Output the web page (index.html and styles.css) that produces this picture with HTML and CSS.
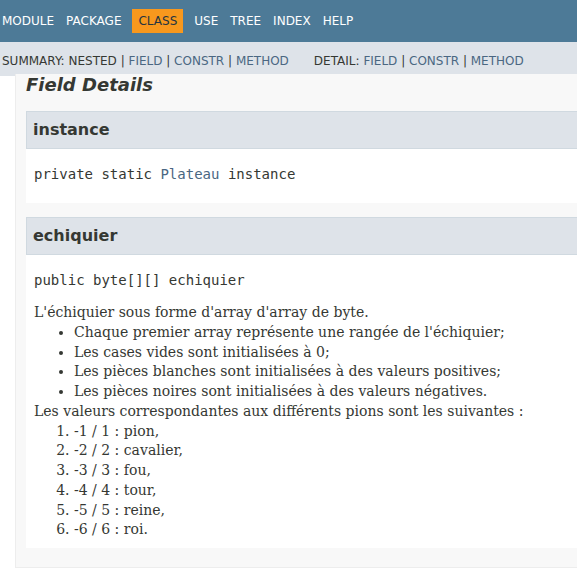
FILE: index.html
```html
<!DOCTYPE html>
<html lang="fr">
<head>
    <meta charset="UTF-8">
    <meta name="viewport" content="width=device-width, initial-scale=1.0">
    <title>Echiquier</title>
    <link rel="stylesheet" href="styles.css">
</head>
<body>
    <header class="flex-header">
        <nav class="top-nav">
            <ul class="nav-list">
                <li>Module</li>
                <li>Package</li>
                <li class="nav-bar-cell1-rev">Class</li>
                <li>Use</li>
                <li>Tree</li>
                <li>Index</li>
                <li>Help</li>
            </ul>
        </nav>
        <div class="sub-nav">
            <ul class="sub-nav-list">
                <li>Summary:&nbsp;</li>
                <li>Nested&nbsp;|&nbsp;</li>
                <li><a href="#field-summary">Field</a>&nbsp;|&nbsp;</li>
                <li><a href="#constructor-summary">Constr</a>&nbsp;|&nbsp;</li>
                <li><a href="#method-summary">Method</a></li>
            </ul>
            <ul class="sub-nav-list">
                <li>Detail:&nbsp;</li>
                <li><a href="#field-detail">Field</a>&nbsp;|&nbsp;</li>
                <li><a href="#constructor-detail">Constr</a>&nbsp;|&nbsp;</li>
                <li><a href="#method-detail">Method</a></li>
            </ul>
        </div>
    </header>

    <main class="flex-content">
        <section class="details" id="field-detail">
            <h2>Field Details</h2>
            <ul class="member-list">
                <li>
                    <section class="detail" id="instance">
                        <h3>instance</h3>
                        <div class="member-body">
                            <div class="member-signature">private static <a href="#plateau">Plateau</a> instance</div>
                        </div>
                    </section>
                </li>
                <li>
                    <section class="detail" id="echiquier">
                        <h3>echiquier</h3>
                        <div class="member-body">
                            <div class="member-signature">public byte[][] echiquier</div>
                            <div class="block">L'échiquier sous forme d'array d'array de byte.
                                <ul>
                                    <li>Chaque premier array représente une rangée de l'échiquier;</li>
                                    <li>Les cases vides sont initialisées à 0;</li>
                                    <li>Les pièces blanches sont initialisées à des valeurs positives;</li>
                                    <li>Les pièces noires sont initialisées à des valeurs négatives.</li>
                                </ul>
                                Les valeurs correspondantes aux différents pions sont les suivantes :
                                <ol>
                                    <li>-1 / 1 : pion,</li>
                                    <li>-2 / 2 : cavalier,</li>
                                    <li>-3 / 3 : fou,</li>
                                    <li>-4 / 4 : tour,</li>
                                    <li>-5 / 5 : reine,</li>
                                    <li>-6 / 6 : roi.</li>
                                </ol>
                            </div>
                        </div>
                    </section>
                </li>
            </ul>
        </section>
    </main>
</body>
</html>
```

FILE: styles.css
```css
html, body {
    margin: 0;
    overflow: hidden;
}
body {
    background-color: #ffffff;
    color: #353833;
    font-family: "DejaVu Sans", Arial, sans-serif;
    font-size: 14px;
}
a {
    color: #4A6782;
    text-decoration: none;
}
.top-nav {
    background-color: #4D7A97;
    color: #ffffff;
    height: 42px;
    display: flex;
    align-items: center;
}
.nav-list {
    display: flex;
    list-style: none;
    margin: 0 0 0 -4px;
    padding: 0;
    font-size: 12px;
    text-transform: uppercase;
}
.nav-list li {
    padding: 5px 6px;
    line-height: 14px;
}
.nav-list .nav-bar-cell1-rev {
    background-color: #F8981D;
    color: #253441;
    margin: 0 5px;
}
.sub-nav {
    background-color: #dee3e9;
    box-sizing: border-box;
    height: 34px;
    padding: 3px 0 0 2px;
    display: flex;
    align-items: center;
    gap: 25px;
}
.sub-nav-list {
    display: flex;
    list-style: none;
    margin: 0;
    padding: 0;
    font-size: 12px;
    text-transform: uppercase;
}
.flex-content {
    padding-left: 15px;
    margin-right: -40px;
}
.details {
    background-color: #f8f8f8;
    border: 1px solid #ededed;
    border-top: none;
    padding: 0 10px 19px 10px;
}
.details h2 {
    margin: -2px 0 16px 0;
    font-size: 18px;
    font-style: italic;
    font-weight: bold;
    line-height: 21px;
}
.member-list {
    list-style: none;
    margin: 0;
    padding: 0;
}
.member-list > li + li {
    margin-top: 14px;
}
.detail {
    background-color: #ffffff;
}
.detail h3 {
    margin: 0;
    background-color: #dee3e9;
    border: 1px solid #d0d9e0;
    padding: 7px 6px;
    font-size: 16px;
    line-height: 22px;
}
.member-body {
    padding: 3px 8px 6px 8px;
}
.member-signature {
    font-family: "DejaVu Sans Mono", monospace;
    font-size: 14px;
    line-height: 17px;
    margin: 14px 0;
    white-space: pre-wrap;
}
.block {
    font-family: "DejaVu Serif", Georgia, serif;
    font-size: 14px;
    line-height: 19.75px;
    margin: 14px 0 2px 0;
}
.block ul, .block ol {
    margin: 0;
    padding-left: 40px;
}
.block ul {
    list-style: disc;
}
```
